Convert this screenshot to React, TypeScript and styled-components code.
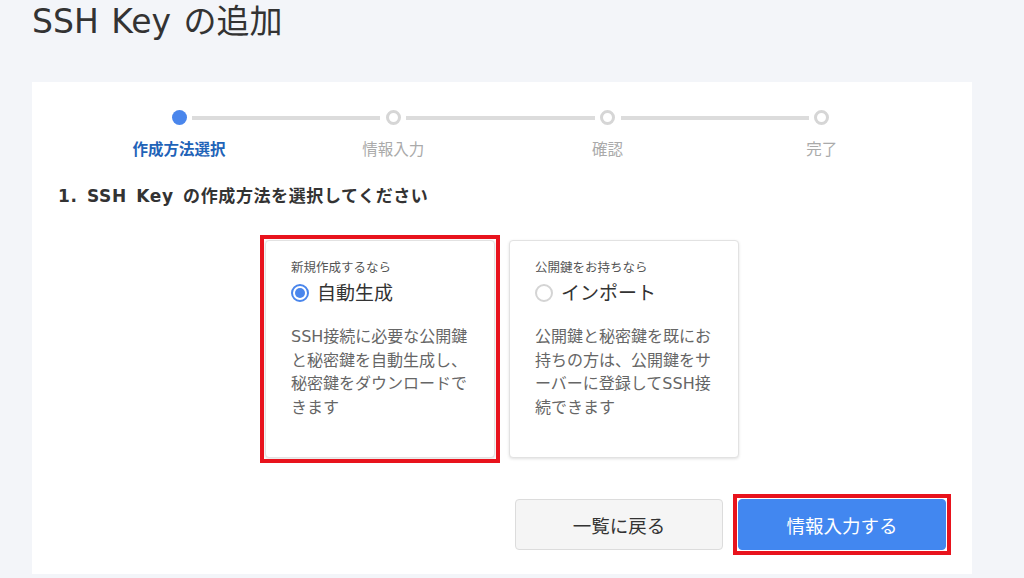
import React, { FunctionComponent } from "react";
import styled, { createGlobalStyle } from "styled-components";

const GlobalStyle = createGlobalStyle`
  body {
    margin: 0;
    background: #f3f5f9;
    font-family: "DejaVu Sans", "Noto Sans CJK JP", sans-serif;
    color: #333;
  }
`;

const Page = styled.div`
  padding: 0 52px 4px 32px;
`;

const Title = styled.h1`
  margin: 0;
  height: 82px;
  padding-top: 2px;
  box-sizing: border-box;
  font-size: 33px;
  line-height: 40px;
  font-weight: 400;
  word-spacing: 2px;
  color: #333;
`;

const Panel = styled.section`
  background: #fff;
  padding: 28px 26px 24px;
`;

const Stepper = styled.ol`
  display: grid;
  grid-template-columns: repeat(4, 1fr);
  margin: 0 17px 0 14px;
  padding: 0;
  list-style: none;
`;

const Step = styled.li<{ $last?: boolean }>`
  position: relative;
  display: flex;
  flex-direction: column;
  align-items: center;

  &::after {
    content: "";
    display: ${(p) => (p.$last ? "none" : "block")};
    position: absolute;
    top: 6px;
    left: calc(50% + 13px);
    width: calc(100% - 26px);
    height: 4px;
    background: #dcdcdc;
  }
`;

const Dot = styled.span<{ $active?: boolean }>`
  width: 15px;
  height: 15px;
  box-sizing: border-box;
  border-radius: 50%;
  background: ${(p) => (p.$active ? "#4a86ec" : "#fff")};
  border: ${(p) => (p.$active ? "none" : "3px solid #d6d6d6")};
`;

const StepLabel = styled.span<{ $active?: boolean }>`
  margin-top: 15px;
  font-size: 15.5px;
  line-height: 20px;
  font-weight: ${(p) => (p.$active ? 700 : 400)};
  color: ${(p) => (p.$active ? "#1f63b8" : "#aaa")};
`;

const Heading = styled.h2`
  margin: 24px 0 0;
  font-size: 17px;
  line-height: 24px;
  font-weight: 700;
  letter-spacing: 0.6px;
  word-spacing: 3px;
  color: #333;
`;

const Options = styled.div`
  display: flex;
  justify-content: center;
  gap: 14px;
  margin-top: 32px;
`;

const Highlight = styled.div<{ $on?: boolean }>`
  position: relative;

  &::after {
    content: "";
    display: ${(p) => (p.$on ? "block" : "none")};
    position: absolute;
    inset: -5px;
    border: 4px solid #e8131d;
    pointer-events: none;
  }
`;

const Card = styled.label`
  display: block;
  width: 230px;
  height: 218px;
  box-sizing: border-box;
  padding: 20px 24px 20px 25px;
  background: #fff;
  border: 1px solid #e2e2e2;
  border-radius: 4px;
  box-shadow: 0 1px 3px rgba(0, 0, 0, 0.12);
  cursor: pointer;
`;

const Hint = styled.div`
  font-size: 12.5px;
  line-height: 14px;
  color: #555;
`;

const RadioRow = styled.div`
  display: flex;
  align-items: center;
  gap: 8px;
  margin-top: 4px;
  font-size: 19px;
  line-height: 28px;
  color: #333;
`;

const Radio = styled.span<{ $checked?: boolean }>`
  position: relative;
  flex: none;
  width: 18px;
  height: 18px;
  box-sizing: border-box;
  border-radius: 50%;
  border: 2px solid ${(p) => (p.$checked ? "#4a86ec" : "#d4d4d4")};
  background: #fff;

  &::after {
    content: "";
    display: ${(p) => (p.$checked ? "block" : "none")};
    position: absolute;
    inset: 2px;
    border-radius: 50%;
    background: #4a86ec;
  }
`;

const Description = styled.p`
  margin: 18px 0 0;
  font-size: 16px;
  line-height: 23.5px;
  color: #666;
`;

const Actions = styled.div`
  display: flex;
  justify-content: flex-end;
  gap: 15px;
  margin-top: 41px;
`;

const Button = styled.button<{ $primary?: boolean }>`
  width: 208px;
  height: 51px;
  border-radius: 4px;
  border: 1px solid ${(p) => (p.$primary ? "#4287f0" : "#dcdcdc")};
  background: ${(p) => (p.$primary ? "#4287f0" : "#f5f5f5")};
  color: ${(p) => (p.$primary ? "#fff" : "#333")};
  font-family: inherit;
  font-size: 18.5px;
  cursor: pointer;
`;

const steps = ["作成方法選択", "情報入力", "確認", "完了"];

const Option: FunctionComponent<{
  hint: string;
  title: string;
  text: string;
  checked?: boolean;
}> = ({ hint, title, text, checked }) => (
  <Highlight $on={checked}>
    <Card>
      <Hint>{hint}</Hint>
      <RadioRow>
        <Radio $checked={checked} />
        {title}
      </RadioRow>
      <Description>{text}</Description>
    </Card>
  </Highlight>
);

export default function App() {
  return (
    <>
      <GlobalStyle />
      <Page>
        <Title>SSH Key の追加</Title>
        <Panel>
          <Stepper>
            {steps.map((s, i) => (
              <Step key={s} $last={i === steps.length - 1}>
                <Dot $active={i === 0} />
                <StepLabel $active={i === 0}>{s}</StepLabel>
              </Step>
            ))}
          </Stepper>
          <Heading>1. SSH Key の作成方法を選択してください</Heading>
          <Options>
            <Option
              checked
              hint="新規作成するなら"
              title="自動生成"
              text="SSH接続に必要な公開鍵と秘密鍵を自動生成し、秘密鍵をダウンロードできます"
            />
            <Option
              hint="公開鍵をお持ちなら"
              title="インポート"
              text="公開鍵と秘密鍵を既にお持ちの方は、公開鍵をサーバーに登録してSSH接続できます"
            />
          </Options>
          <Actions>
            <Button>一覧に戻る</Button>
            <Highlight $on>
              <Button $primary>情報入力する</Button>
            </Highlight>
          </Actions>
        </Panel>
      </Page>
    </>
  );
}
